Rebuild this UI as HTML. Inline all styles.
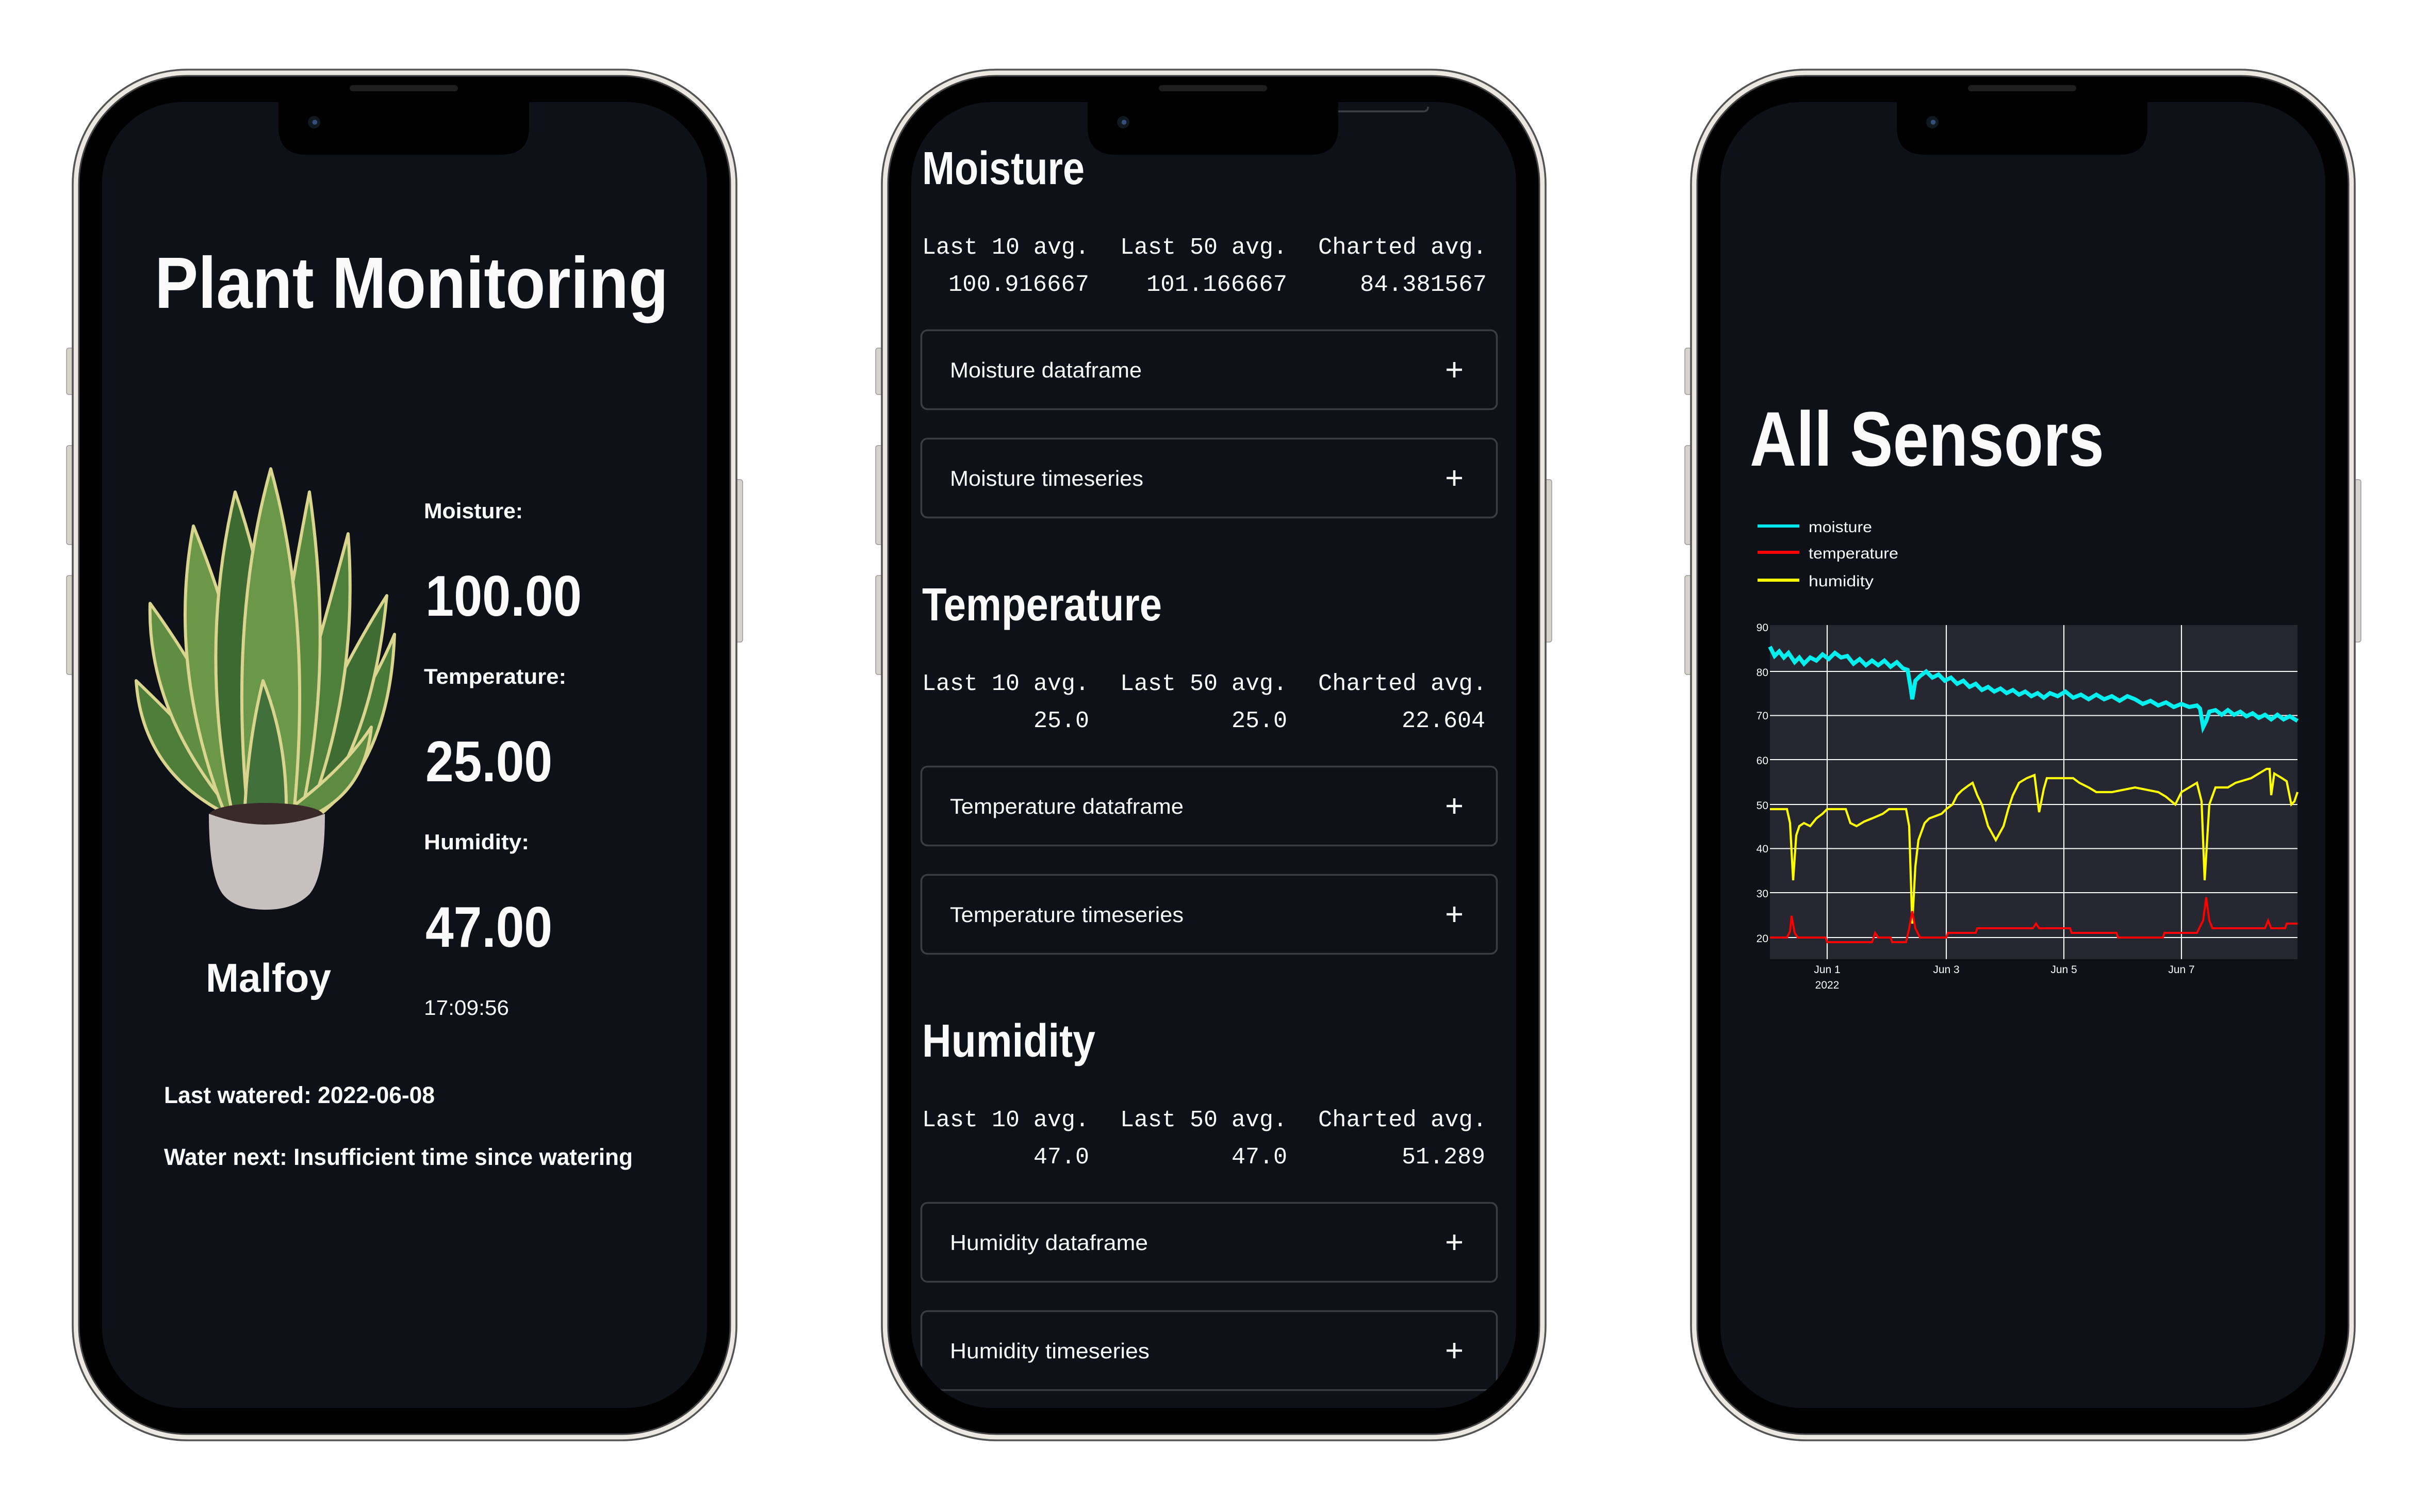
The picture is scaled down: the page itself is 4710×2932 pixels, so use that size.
<!DOCTYPE html>
<html><head><meta charset="utf-8"><style>
html,body{margin:0;padding:0;background:#fff;width:4710px;height:2932px;overflow:hidden}
svg{display:block}
text{font-family:"Liberation Sans",sans-serif;fill:#fafafa}
.m{font-family:"Liberation Mono",monospace;font-size:15px}
</style></head><body>
<svg width="4710" height="2932" viewBox="0 0 1570 977.33" xmlns="http://www.w3.org/2000/svg">
<defs>
<g id="phone">
  <rect x="43" y="225" width="5" height="30" rx="1.5" fill="#d6d3cc" stroke="#999" stroke-width=".5"/>
  <rect x="43" y="288" width="5" height="64" rx="1.5" fill="#d6d3cc" stroke="#999" stroke-width=".5"/>
  <rect x="43" y="372" width="5" height="64" rx="1.5" fill="#d6d3cc" stroke="#999" stroke-width=".5"/>
  <rect x="475" y="310" width="5" height="105" rx="1.5" fill="#d6d3cc" stroke="#999" stroke-width=".5"/>
  <rect x="47" y="45" width="429" height="886" rx="74" fill="#ebe8e1" stroke="#555" stroke-width="1.2"/>
  <rect x="51" y="49" width="421" height="878" rx="70" fill="#000" stroke="#444" stroke-width="1"/>
  <rect x="66" y="66" width="391" height="844" rx="52" fill="#0e1117"/>
  <path d="M180 66 h162 v16 q0 18 -18 18 h-126 q-18 0 -18 -18 z" fill="#000"/>
  <rect x="226" y="55" width="70" height="4" rx="2" fill="#1e1e1e"/>
  <circle cx="203" cy="79" r="4" fill="#101820"/>
  <circle cx="203.5" cy="79" r="1.6" fill="#34507a"/>
</g>
<clipPath id="scr"><rect x="66" y="66" width="391" height="844" rx="52"/></clipPath>
</defs>

<!-- PHONE 1 -->
<use href="#phone"/>
<text x="100" y="199" font-size="47" font-weight="bold" textLength="332" lengthAdjust="spacingAndGlyphs">Plant Monitoring</text>
<g stroke="#d9d48e" stroke-width="2" stroke-linejoin="round">
  <path d="M150 528 Q92 500 88 440 Q132 482 170 528Z" fill="#4f7e3a"/>
  <path d="M175 528 Q230 470 255 410 Q252 492 205 528Z" fill="#4a7a38"/>
  <path d="M150 525 Q95 460 97 390 Q142 452 170 525Z" fill="#5f8d42"/>
  <path d="M180 525 Q215 440 250 385 Q242 472 205 525Z" fill="#3f6c33"/>
  <path d="M145 525 Q108 430 125 340 Q162 430 170 525Z" fill="#6b9747"/>
  <path d="M175 525 Q205 420 225 345 Q232 442 200 525Z" fill="#4e7f3b"/>
  <path d="M150 525 Q128 420 152 318 Q187 420 175 525Z" fill="#3d6a31"/>
  <path d="M168 525 Q180 420 200 318 Q216 430 195 525Z" fill="#5a8a40"/>
  <path d="M160 525 Q148 400 175 303 Q202 400 190 525Z" fill="#6a9848"/>
  <path d="M180 528 Q220 500 240 470 Q236 512 200 528Z" fill="#5d8b42"/>
  <path d="M158 528 Q160 480 170 440 Q186 480 185 528Z" fill="#41703a"/>
</g>
<ellipse cx="172" cy="527" rx="37" ry="8" fill="#3b2a2a"/>
<path d="M135 526 Q172 540 210 526 Q210 566 200 578 Q190 588 172 588 Q152 588 144 578 Q135 566 135 526Z" fill="#c8bfbf"/>
<text x="133" y="641" font-size="26" font-weight="bold" textLength="81" lengthAdjust="spacingAndGlyphs">Malfoy</text>
<text x="274" y="335" font-size="14" font-weight="bold" textLength="64" lengthAdjust="spacingAndGlyphs">Moisture:</text>
<text x="275" y="398" font-size="37" font-weight="bold" textLength="101" lengthAdjust="spacingAndGlyphs">100.00</text>
<text x="274" y="442" font-size="14" font-weight="bold" textLength="92" lengthAdjust="spacingAndGlyphs">Temperature:</text>
<text x="275" y="505" font-size="37" font-weight="bold" textLength="82" lengthAdjust="spacingAndGlyphs">25.00</text>
<text x="274" y="549" font-size="14" font-weight="bold" textLength="68" lengthAdjust="spacingAndGlyphs">Humidity:</text>
<text x="275" y="612" font-size="37" font-weight="bold" textLength="82" lengthAdjust="spacingAndGlyphs">47.00</text>
<text x="274" y="656" font-size="13.5" textLength="55" lengthAdjust="spacingAndGlyphs">17:09:56</text>
<text x="106" y="713" font-size="15" font-weight="bold" textLength="175" lengthAdjust="spacingAndGlyphs">Last watered: 2022-06-08</text>
<text x="106" y="753" font-size="15" font-weight="bold" textLength="303" lengthAdjust="spacingAndGlyphs">Water next: Insufficient time since watering</text>

<!-- PHONE 2 -->
<g transform="translate(523,0)">
<use href="#phone"/>
<g clip-path="url(#scr)">
<path d="M342 72 h55 q3 0 3 -3" stroke="#3a3d45" stroke-width="1.2" fill="none"/>
<text x="73" y="119" font-size="30" font-weight="bold" textLength="105" lengthAdjust="spacingAndGlyphs">Moisture</text>
<text class="m" x="73" y="164" textLength="108" lengthAdjust="spacingAndGlyphs">Last 10 avg.</text>
<text class="m" x="201" y="164" textLength="108" lengthAdjust="spacingAndGlyphs">Last 50 avg.</text>
<text class="m" x="329" y="164" textLength="109" lengthAdjust="spacingAndGlyphs">Charted avg.</text>
<rect x="72.5" y="213.5" width="372" height="51" rx="4" fill="none" stroke="#3a3d45" stroke-width="1.2"/>
<rect x="72.5" y="283.5" width="372" height="51" rx="4" fill="none" stroke="#3a3d45" stroke-width="1.2"/>
<path d="M417 234 v10 M412 239 h10 M417 304 v10 M412 309 h10" stroke="#fafafa" stroke-width="1.5"/>
<text class="m" x="90" y="188" textLength="91" lengthAdjust="spacingAndGlyphs">100.916667</text>
<text class="m" x="218" y="188" textLength="91" lengthAdjust="spacingAndGlyphs">101.166667</text>
<text class="m" x="356" y="188" textLength="82" lengthAdjust="spacingAndGlyphs">84.381567</text>
<text x="91" y="244" font-size="14" textLength="124" lengthAdjust="spacingAndGlyphs">Moisture dataframe</text>
<text x="91" y="314" font-size="14" textLength="125" lengthAdjust="spacingAndGlyphs">Moisture timeseries</text>

<g transform="translate(0,282)">
<text x="73" y="119" font-size="30" font-weight="bold" textLength="155" lengthAdjust="spacingAndGlyphs">Temperature</text>
<text class="m" x="73" y="164" textLength="108" lengthAdjust="spacingAndGlyphs">Last 10 avg.</text>
<text class="m" x="201" y="164" textLength="108" lengthAdjust="spacingAndGlyphs">Last 50 avg.</text>
<text class="m" x="329" y="164" textLength="109" lengthAdjust="spacingAndGlyphs">Charted avg.</text>
<rect x="72.5" y="213.5" width="372" height="51" rx="4" fill="none" stroke="#3a3d45" stroke-width="1.2"/>
<rect x="72.5" y="283.5" width="372" height="51" rx="4" fill="none" stroke="#3a3d45" stroke-width="1.2"/>
<path d="M417 234 v10 M412 239 h10 M417 304 v10 M412 309 h10" stroke="#fafafa" stroke-width="1.5"/>
<text class="m" x="145" y="188">25.0</text>
<text class="m" x="273" y="188">25.0</text>
<text class="m" x="383" y="188">22.604</text>
<text x="91" y="244" font-size="14" textLength="151" lengthAdjust="spacingAndGlyphs">Temperature dataframe</text>
<text x="91" y="314" font-size="14" textLength="151" lengthAdjust="spacingAndGlyphs">Temperature timeseries</text>
</g>
<g transform="translate(0,564)">
<text x="73" y="119" font-size="30" font-weight="bold" textLength="112" lengthAdjust="spacingAndGlyphs">Humidity</text>
<text class="m" x="73" y="164" textLength="108" lengthAdjust="spacingAndGlyphs">Last 10 avg.</text>
<text class="m" x="201" y="164" textLength="108" lengthAdjust="spacingAndGlyphs">Last 50 avg.</text>
<text class="m" x="329" y="164" textLength="109" lengthAdjust="spacingAndGlyphs">Charted avg.</text>
<rect x="72.5" y="213.5" width="372" height="51" rx="4" fill="none" stroke="#3a3d45" stroke-width="1.2"/>
<rect x="72.5" y="283.5" width="372" height="51" rx="4" fill="none" stroke="#3a3d45" stroke-width="1.2"/>
<path d="M417 234 v10 M412 239 h10 M417 304 v10 M412 309 h10" stroke="#fafafa" stroke-width="1.5"/>
<text class="m" x="145" y="188">47.0</text>
<text class="m" x="273" y="188">47.0</text>
<text class="m" x="383" y="188">51.289</text>
<text x="91" y="244" font-size="14" textLength="128" lengthAdjust="spacingAndGlyphs">Humidity dataframe</text>
<text x="91" y="314" font-size="14" textLength="129" lengthAdjust="spacingAndGlyphs">Humidity timeseries</text>
</g>
</g>
</g>

<!-- PHONE 3 -->
<g transform="translate(1046,0)"><use href="#phone"/></g>
<text x="1131" y="301" font-size="50" font-weight="bold" textLength="229" lengthAdjust="spacingAndGlyphs">All Sensors</text>
<line x1="1136" y1="340" x2="1163" y2="340" stroke="#00e5ee" stroke-width="2"/>
<line x1="1136" y1="357" x2="1163" y2="357" stroke="#f00" stroke-width="2"/>
<line x1="1136" y1="375" x2="1163" y2="375" stroke="#ff0" stroke-width="2"/>
<text x="1169" y="344" font-size="10" textLength="41" lengthAdjust="spacingAndGlyphs">moisture</text>
<text x="1169" y="361" font-size="10" textLength="58" lengthAdjust="spacingAndGlyphs">temperature</text>
<text x="1169" y="379" font-size="10" textLength="42" lengthAdjust="spacingAndGlyphs">humidity</text>

<rect x="1144" y="404" width="341" height="216" fill="#262730"/>
<g stroke="#fff" stroke-width=".7">
<path d="M1181 404 V620 M1258 404 V620 M1334 404 V620 M1410 404 V620"/>
<path d="M1144 434 H1485 M1144 462.5 H1485 M1144 491 H1485 M1144 520 H1485 M1144 548.5 H1485 M1144 577 H1485 M1144 606 H1485"/>
</g>
<g font-size="7" text-anchor="end">
<text x="1143" y="408">90</text><text x="1143" y="437">80</text><text x="1143" y="465">70</text><text x="1143" y="494">60</text><text x="1143" y="523">50</text><text x="1143" y="551">40</text><text x="1143" y="580">30</text><text x="1143" y="609">20</text>
</g>
<g font-size="7" text-anchor="middle">
<text x="1181" y="629">Jun 1</text><text x="1181" y="639">2022</text>
<text x="1258" y="629">Jun 3</text><text x="1334" y="629">Jun 5</text><text x="1410" y="629">Jun 7</text>
</g>
<polyline fill="none" stroke="#00f0f0" stroke-width="2.6" points="1144,418 1147,424 1150,421 1153,425 1156,422 1160,428 1163,425 1166,429 1170,425 1174,427 1178,423 1182,426 1186,422 1190,425 1194,424 1198,429 1202,426 1206,430 1210,427 1214,430 1218,427 1222,431 1226,428 1230,432 1233,433 1235,445 1236,452 1238,440 1241,437 1245,434 1249,438 1253,436 1257,440 1261,438 1265,442 1269,440 1273,444 1277,442 1281,446 1285,444 1289,447 1293,445 1297,448 1301,446 1305,449 1309,447 1313,450 1317,448 1321,451 1325,448 1330,450 1335,447 1340,451 1345,449 1350,452 1355,449 1360,452 1365,450 1370,453 1375,450 1380,452 1385,455 1390,453 1395,456 1400,454 1405,457 1410,455 1415,457 1420,456 1422,458 1424,470 1426,466 1428,460 1432,459 1436,462 1440,459 1444,462 1448,460 1452,463 1456,461 1460,464 1464,462 1468,465 1472,462 1476,465 1480,463 1485,466"/>
<polyline fill="none" stroke="#ffff00" stroke-width="1.4" points="1144,523 1155,523 1157,532 1159,569 1161,540 1163,534 1166,532 1170,534 1174,529 1178,526 1181,523 1193,523 1196,532 1200,534 1205,531 1210,529 1217,526 1221,523 1232,523 1234,534 1236,597 1238,560 1240,543 1244,532 1247,529 1255,526 1258,523 1262,520 1265,514 1268,511 1272,508 1275,506 1278,514 1281,520 1285,534 1290,543 1295,534 1298,523 1301,514 1305,506 1310,503 1315,501 1318,525 1321,510 1323,503 1340,503 1344,506 1350,509 1355,512 1365,512 1380,509 1395,512 1400,515 1406,520 1410,512 1415,509 1420,506 1423,518 1425,569 1428,520 1432,509 1440,509 1445,506 1455,503 1460,500 1465,497 1467,497 1468,514 1470,500 1475,503 1478,505 1481,520 1483,518 1485,512"/>
<polyline fill="none" stroke="#ff0000" stroke-width="1.3" points="1144,606 1155,606 1157,602 1158,592 1160,603 1162,606 1180,606 1181,609 1210,609 1212,603 1214,606 1222,606 1223,609 1232,609 1234,600 1236,589 1238,600 1241,606 1258,606 1259,603 1277,603 1278,600 1314,600 1316,597 1318,600 1338,600 1339,603 1368,603 1369,606 1398,606 1399,603 1420,603 1424,595 1426,580 1428,595 1430,600 1464,600 1466,595 1468,600 1477,600 1478,597 1485,597"/>
</svg>
</body></html>
